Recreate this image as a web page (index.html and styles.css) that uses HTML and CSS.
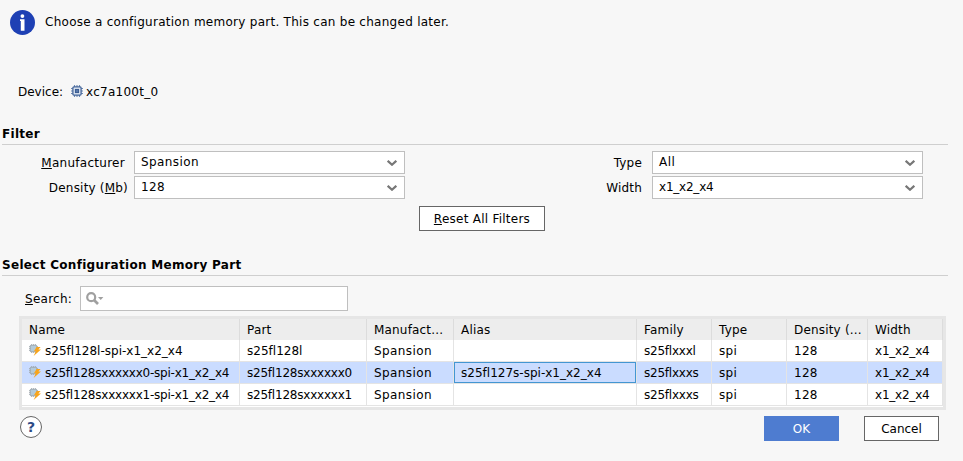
FILE: index.html
```html
<!DOCTYPE html>
<html lang="en">
<head>
<meta charset="utf-8">
<title>Add Configuration Memory Device</title>
<link rel="stylesheet" href="styles.css">
</head>
<body>
<svg class="defs" width="0" height="0">
  <symbol id="chevron" viewBox="0 0 10 6"><path d="M.7.8 5 4.7 9.3.8" fill="none" stroke="#777" stroke-width="2.2"/></symbol>
  <symbol id="part" viewBox="0 0 12 12">
    <path d="M2.5 0v9M4.5 0v9M6.5 0v9M0 2.5h9M0 4.5h9M0 6.5h9" stroke="#a9b0b5" stroke-width=".8"/>
    <rect x="1.2" y="1.2" width="6.6" height="6.6" rx="1" fill="#b4cad8" stroke="#9ca6ad"/>
    <path d="M7.6 3 4.9 7.2h2L4.6 12 12 5.4H9.4L11.6 3z" fill="#f9a51a"/>
  </symbol>
</svg>
<main class="dialog">
  <header class="intro">
    <svg class="info" viewBox="0 0 25 25"><circle cx="12.5" cy="12.5" r="12.5" fill="#1e40b4"/><circle cx="12.4" cy="6.1" r="1.9" fill="#fff"/><path d="M10 9.2h4.5v11.6h-3.7V11H10z" fill="#fff"/></svg>
    <p class="message">Choose a configuration memory part. This can be changed later.</p>
  </header>
  <div class="device">
    <span class="device-label">Device:</span>
    <svg class="chip" viewBox="0 0 12 12"><path d="M3.5 0v12M6 0v12M8.5 0v12M0 3.5h12M0 6h12M0 8.5h12" stroke="#6b87b0" stroke-width="1.1"/><rect x="1.9" y="1.9" width="8.2" height="8.2" rx="1" fill="#dfe7f2" stroke="#45669a" stroke-width="1.3"/><rect x="4.4" y="4.4" width="3.2" height="3.2" fill="#5877a8" stroke="#36588f"/></svg>
    <span class="device-name">xc7a100t_0</span>
  </div>
  <section class="filter">
    <h2>Filter</h2>
    <div class="fields">
      <label class="manufacturer"><u>M</u>anufacturer</label><div class="combo"><span>Spansion</span><svg><use href="#chevron"/></svg></div>
      <label class="type">Type</label><div class="combo"><span>All</span><svg><use href="#chevron"/></svg></div>
      <label>Density (<u>M</u>b)</label><div class="combo"><span>128</span><svg><use href="#chevron"/></svg></div>
      <label class="type">Width</label><div class="combo"><span class="snug">x1_x2_x4</span><svg><use href="#chevron"/></svg></div>
    </div>
    <button class="reset"><u>R</u>eset All Filters</button>
  </section>
  <section class="parts">
    <h2>Select Configuration Memory Part</h2>
    <div class="search"><label><u>S</u>earch:</label>
      <div class="search-box"><svg viewBox="0 0 18 13"><circle cx="5.2" cy="5.2" r="4" fill="none" stroke="#a0a0a0" stroke-width="2.2"/><path d="m8 8 4 4" stroke="#a0a0a0" stroke-width="2.6"/><path d="M12 5h5.4l-2.7 3z" fill="#a0a0a0"/></svg></div>
    </div>
    <div class="table">
      <div class="row head"><span>Name</span><span>Part</span><span>Manufact...</span><span>Alias</span><span>Family</span><span>Type</span><span>Density (...</span><span>Width</span></div>
      <div class="row"><span class="even"><svg><use href="#part"/></svg>s25fl128l-spi-x1_x2_x4</span><span class="even">s25fl128l</span><span class="wide">Spansion</span><span></span><span class="snug">s25flxxxl</span><span>spi</span><span>128</span><span class="snug">x1_x2_x4</span></div>
      <div class="row selected"><span class="snug"><svg><use href="#part"/></svg>s25fl128sxxxxxx0-spi-x1_x2_x4</span><span class="snug">s25fl128sxxxxxx0</span><span class="wide">Spansion</span><span class="even focused">s25fl127s-spi-x1_x2_x4</span><span class="snug">s25flxxxs</span><span>spi</span><span>128</span><span class="snug">x1_x2_x4</span></div>
      <div class="row"><span class="snug"><svg><use href="#part"/></svg>s25fl128sxxxxxx1-spi-x1_x2_x4</span><span class="snug">s25fl128sxxxxxx1</span><span class="wide">Spansion</span><span></span><span class="snug">s25flxxxs</span><span>spi</span><span>128</span><span class="snug">x1_x2_x4</span></div>
    </div>
  </section>
  <footer>
    <button class="help">?</button>
    <button class="ok">OK</button>
    <button class="cancel">Cancel</button>
  </footer>
</main>
</body>
</html>
```

FILE: styles.css
```css
* { box-sizing: border-box; }
body { margin: 0; background: #f7f7f7; color: #000; font: 12px/14px "DejaVu Sans", sans-serif; letter-spacing: .27px; overflow: hidden; }
svg { display: block; flex: none; }
.defs { position: absolute; }
u { text-decoration: underline; text-decoration-thickness: 1px; text-underline-offset: 1px; }
.dialog { height: 461px; display: flex; flex-direction: column; }
.intro { display: flex; height: 84px; padding: 10px 0 0 10px; gap: 10px; }
.info { width: 25px; height: 25px; }
.message { margin: 5px 0 0; }
.device { display: flex; height: 43px; padding-left: 18px; }
.device > span { padding-top: 1px; }
.device-label { width: 53px; letter-spacing: 0; }
.chip { width: 12px; height: 12px; margin: 1px 3px 0 0; }
h2 { margin: 0 15px 0 2px; height: 18px; border-bottom: 1px solid #cfcfcf; font-size: 12px; line-height: 14px; letter-spacing: .3px; }
.filter { height: 131px; }
.fields { display: grid; grid-template-columns: 128px 277px 241px 277px; grid-template-rows: 23px 23px; row-gap: 2px; margin-top: 6px; }
.fields label { text-align: right; padding-top: 5px; letter-spacing: .2px; }
.fields .manufacturer { padding-right: 3px; letter-spacing: .28px; }
.fields .type { padding-right: 4px; }
.combo { border: 1px solid #bfbfbf; background: #fff; display: flex; justify-content: space-between; padding: 3px 6px; margin-left: 6px; width: 271px; letter-spacing: .42px; }
.combo svg { width: 10px; height: 6px; margin: 5px 1px 0 0; }
button { font: inherit; letter-spacing: 0; color: #000; width: 75px; height: 25px; padding: 0; background: #fff; border: 1px solid #666; }
.reset { display: block; width: 126px; margin: 7px 0 0 419px; letter-spacing: .25px; }
.search { display: flex; margin: 10px 0 4px 25px; height: 26px; }
.search label { width: 55px; padding-top: 6px; }
.search-box { width: 268px; height: 25px; border: 1px solid #bfbfbf; background: #fff; padding: 5px; }
.search-box svg { width: 18px; height: 13px; }
.table { width: 927px; height: 94px; margin-left: 19px; border: 3px solid #e6e6e6; background: #fff; }
.row { display: grid; grid-template-columns: 218px 127px 87px 183px 75px 75px 81px 75px; height: 22px; }
.row > span { display: flex; padding: 4px 0 0 7px; border-right: 1px solid #e4e4e4; border-bottom: 1px solid #e4e4e4; white-space: nowrap; }
.head { height: 21px; background: #ededed; letter-spacing: .18px; }
.head > span { border-bottom: 0; border-right-color: #dcdcdc; }
.row svg { width: 12px; height: 12px; margin: 0 4px 0 0; }
.selected { background: #cadcff; }
.row .focused { padding: 3px 0 0 6px; border: 1px solid #4396d2; box-shadow: 1px 0 #e4e4e4, 0 1px #e4e4e4; margin: 0 1px 1px 0; }
.even { letter-spacing: .01px; }
.snug { letter-spacing: -.22px; }
.wide { letter-spacing: .42px; }
footer { display: flex; padding: 6px 0 0 20px; }
.help { width: 22px; height: 22px; border-radius: 50%; color: #2c4a85; font-weight: bold; font-size: 14px; line-height: 18px; margin-right: 722px; }
footer .ok { background: #4e7cd0; border-color: #4e7cd0; color: #fff; margin-right: 25px; }
```
